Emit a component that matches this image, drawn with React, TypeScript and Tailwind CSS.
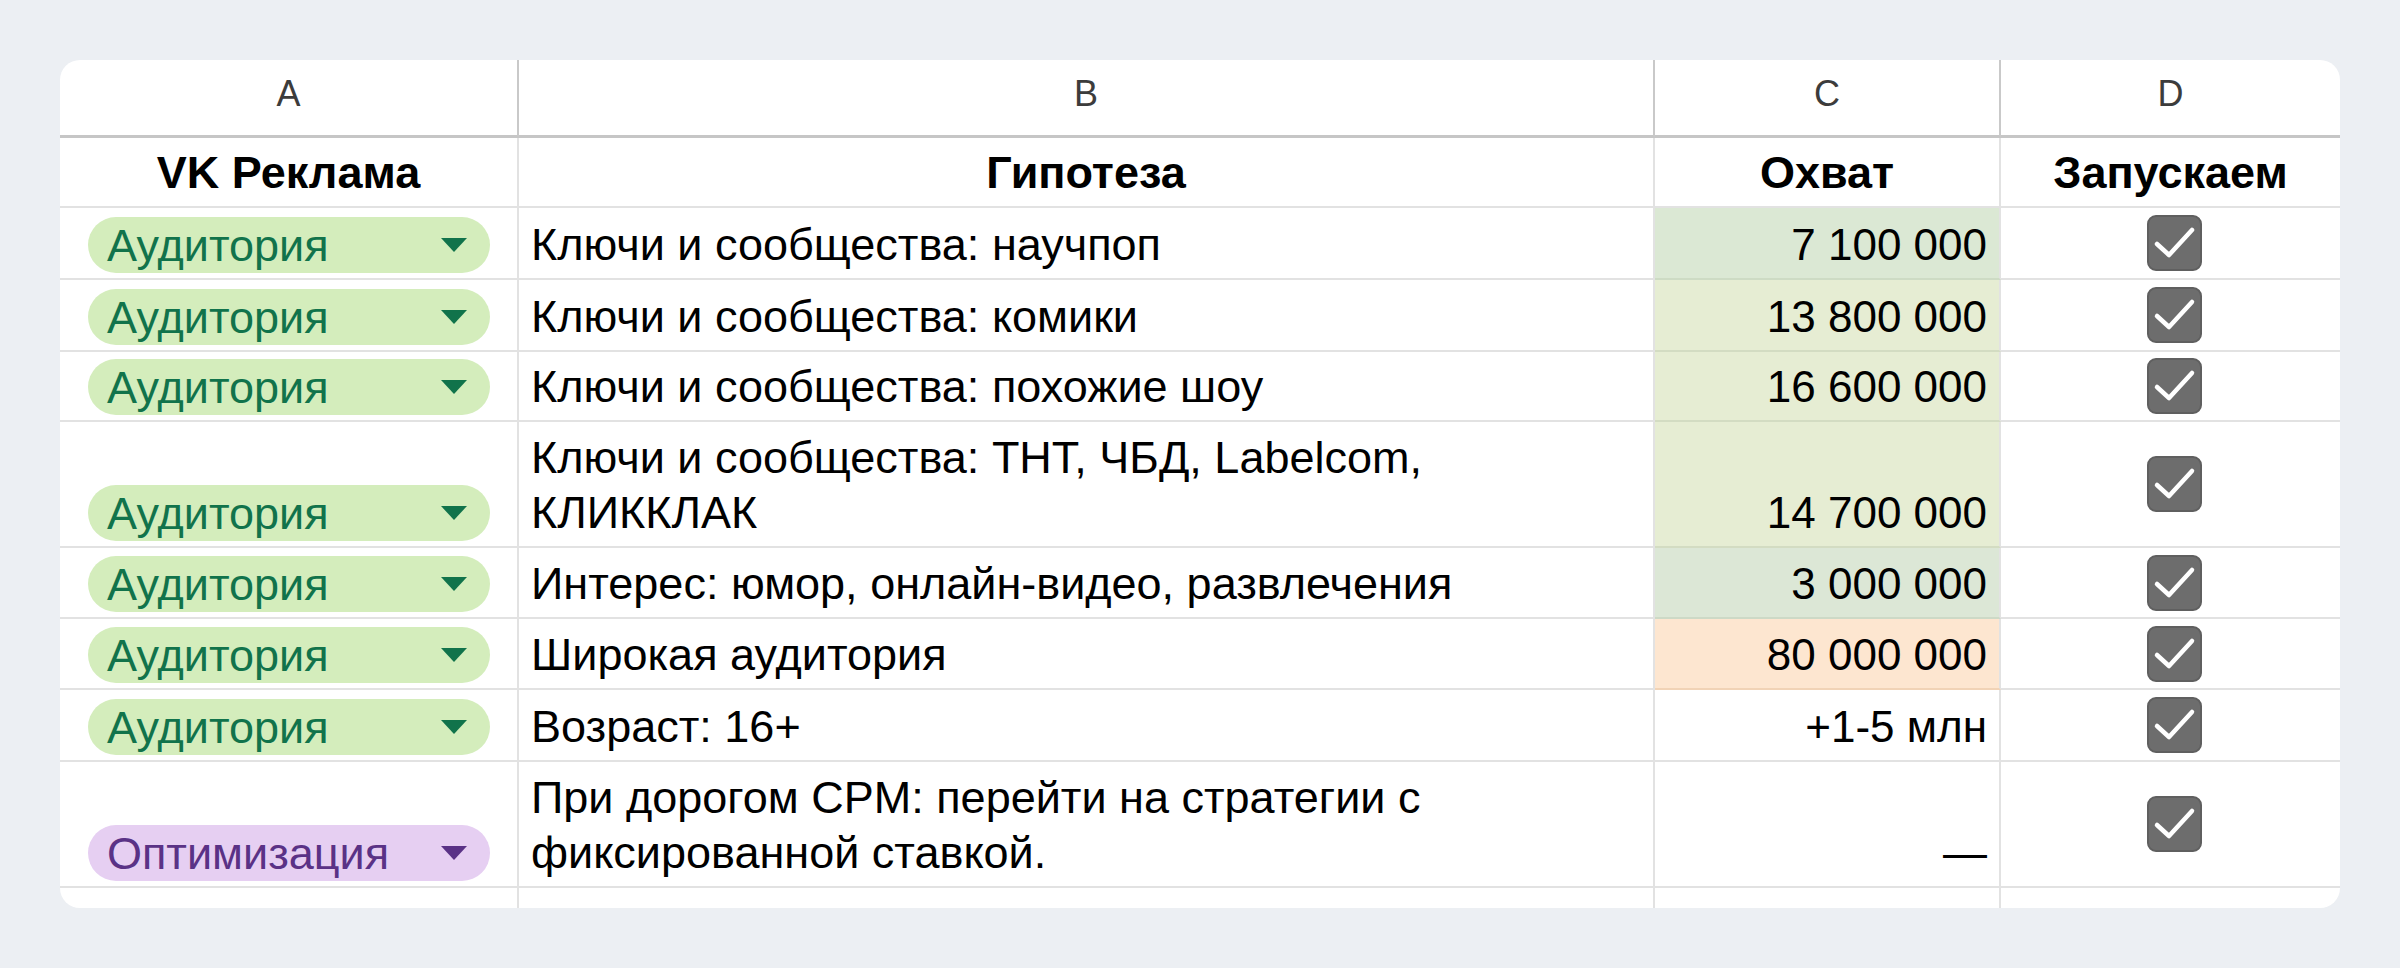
import React from "react";

type Row = {
  kind: "aud" | "opt";
  text: React.ReactNode;
  reach: string;
  cellBg: string;
  h: string;
};

const rows: Row[] = [
  { kind: "aud", text: "Ключи и сообщества: научпоп", reach: "7 100 000", cellBg: "bg-[#dbe8d4] border-b-[#cddbc4]", h: "h-[72px]" },
  { kind: "aud", text: "Ключи и сообщества: комики", reach: "13 800 000", cellBg: "bg-[#e6edd3] border-b-[#d3dcc2]", h: "h-[72px]" },
  { kind: "aud", text: "Ключи и сообщества: похожие шоу", reach: "16 600 000", cellBg: "bg-[#e6edd3] border-b-[#d3dcc2]", h: "h-[70px]" },
  {
    kind: "aud",
    text: (
      <>
        Ключи и сообщества: ТНТ, ЧБД, Labelcom,
        <br />
        КЛИККЛАК
      </>
    ),
    reach: "14 700 000",
    cellBg: "bg-[#e6edd3] border-b-[#d3dcc2]",
    h: "h-[126px]",
  },
  { kind: "aud", text: "Интерес: юмор, онлайн-видео, развлечения", reach: "3 000 000", cellBg: "bg-[#dce7d6] border-b-[#cdd9c6]", h: "h-[71px]" },
  { kind: "aud", text: "Широкая аудитория", reach: "80 000 000", cellBg: "bg-[#fde6d0] border-b-[#f1d3b6]", h: "h-[71px]" },
  { kind: "aud", text: "Возраст: 16+", reach: "+1-5 млн", cellBg: "bg-white border-b-[#e2e2e2]", h: "h-[72px]" },
  {
    kind: "opt",
    text: (
      <>
        При дорогом CPM: перейти на стратегии с
        <br />
        фиксированной ставкой.
      </>
    ),
    reach: "—",
    cellBg: "bg-white border-b-[#e2e2e2]",
    h: "h-[126px]",
  },
];

function Chip({ kind }: { kind: "aud" | "opt" }) {
  const isAud = kind === "aud";
  return (
    <div
      className={
        isAud
          ? "flex h-[56px] w-[402px] items-center justify-between rounded-full bg-[#d4edbc] pl-[19px] pr-[22px] text-[#11734b]"
          : "flex h-[56px] w-[402px] items-center justify-between rounded-full bg-[#e6cff2] pl-[19px] pr-[22px] text-[#5a3286]"
      }
    >
      <span className="text-[45px] leading-[55px]">{isAud ? "Аудитория" : "Оптимизация"}</span>
      <svg width="28" height="16" viewBox="0 0 28 16">
        <polygon points="1,1 27,1 14,15" fill={isAud ? "#11734b" : "#5a3286"} />
      </svg>
    </div>
  );
}

function CheckBox() {
  return (
    <svg width="55" height="56" viewBox="0 0 55 56">
      <rect x="1" y="1" width="53" height="54" rx="8" fill="#6d6d6d" stroke="#5f5f5f" strokeWidth="2" />
      <path d="M10 29 L22 40 L45 15" fill="none" stroke="#ffffff" strokeWidth="4.5" strokeLinecap="round" strokeLinejoin="round" />
    </svg>
  );
}

export default function App() {
  const cellBase = "flex border-b-2 border-r-2 border-[#e2e2e2]";
  return (
    <div className="min-h-screen w-full bg-[#eceff3] p-[60px] font-['Liberation_Sans',Arial,sans-serif] text-black">
      <div className="w-[2280px] overflow-hidden rounded-[20px] bg-white">
        <div className="grid grid-cols-[459px_1136px_346px_339px]">
          {/* column letters */}
          {["A", "B", "C", "D"].map((l, i) => (
            <div
              key={l}
              className={
                i < 3
                  ? "flex h-[78px] items-center justify-center border-b-[3px] border-r-2 border-b-[#c6c6c6] border-r-[#c9c9c9] pb-[8px] text-[36px] text-[#3c3c3c]"
                  : "flex h-[78px] items-center justify-center border-b-[3px] border-b-[#c6c6c6] pb-[8px] text-[36px] text-[#3c3c3c]"
              }
            >
              {l}
            </div>
          ))}

          {/* header row */}
          {["VK Реклама", "Гипотеза", "Охват", "Запускаем"].map((t, i) => (
            <div
              key={t}
              className={
                i < 3
                  ? "flex h-[70px] items-end justify-center border-b-2 border-r-2 border-[#e2e2e2] pb-[6px] text-[45px] font-bold leading-[55px]"
                  : "flex h-[70px] items-end justify-center border-b-2 border-[#e2e2e2] pb-[6px] text-[45px] font-bold leading-[55px]"
              }
            >
              {t}
            </div>
          ))}

          {rows.map((r, idx) => (
            <React.Fragment key={idx}>
              <div className={`${cellBase} ${r.h} items-end pb-[5px] pl-[28px]`}>
                <Chip kind={r.kind} />
              </div>
              <div className={`${cellBase} ${r.h} items-end pb-[6px] pl-[12px] text-[45px] leading-[55px]`}>
                <div>{r.text}</div>
              </div>
              <div
                className={`flex border-b-2 border-r-2 border-r-[#e2e2e2] ${r.cellBg} ${r.h} items-end justify-end pb-[6px] pr-[12px] text-[44px] leading-[55px]`}
              >
                {r.reach}
              </div>
              <div className={`flex border-b-2 border-[#e2e2e2] ${r.h} items-center justify-center pl-[8px]`}>
                <CheckBox />
              </div>
            </React.Fragment>
          ))}

          {/* partial trailing row */}
          <div className="h-[20px] border-r-2 border-[#e2e2e2]" />
          <div className="h-[20px] border-r-2 border-[#e2e2e2]" />
          <div className="h-[20px] border-r-2 border-[#e2e2e2]" />
          <div className="h-[20px]" />
        </div>
      </div>
    </div>
  );
}
